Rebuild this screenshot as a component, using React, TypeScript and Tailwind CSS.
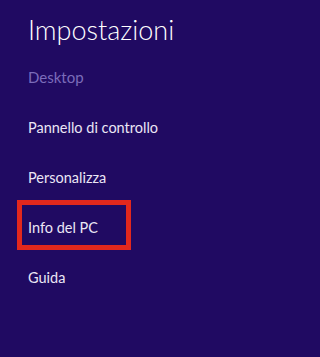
import React from "react";

const items = ["Pannello di controllo", "Personalizza", "Info del PC", "Guida"];

export default function App() {
  return (
    <div
      className="w-full min-w-[299px] h-screen min-h-[357px] bg-[#200a62] pl-[28px] overflow-hidden"
      style={{ fontFamily: 'Lato, "Open Sans", sans-serif' }}
    >
      <div className="h-[50px] pt-[13px] text-[27px] leading-[34px] font-light text-white">
        Impostazioni
      </div>
      <div className="h-[50px] flex items-center pt-[5px] text-[15px] text-[#7b6cba]">
        Desktop
      </div>
      {items.map((label) =>
        label === "Info del PC" ? (
          <div
            key={label}
            className="h-[50px] w-[114px] -ml-[11px] pl-[6px] border-[5px] border-[#e2281d] flex items-center text-[14.5px] text-[#ebe6f5]"
          >
            <span className="pt-[5px]">{label}</span>
          </div>
        ) : (
          <div
            key={label}
            className="h-[50px] flex items-center pt-[5px] text-[14.5px] text-[#ebe6f5]"
          >
            {label}
          </div>
        )
      )}
    </div>
  );
}
